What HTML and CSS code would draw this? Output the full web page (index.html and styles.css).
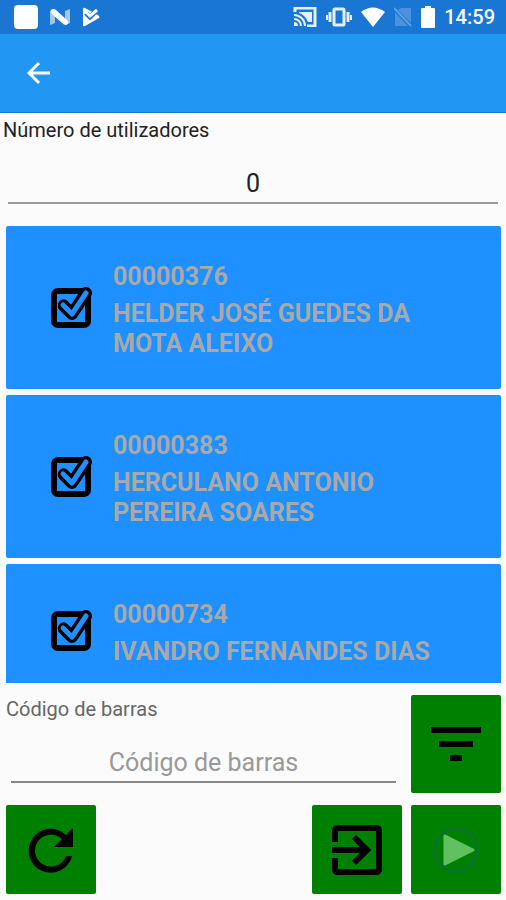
FILE: index.html
```html
<!DOCTYPE html>
<html lang="pt">
<head>
    <meta charset="UTF-8">
    <meta name="viewport" content="width=device-width, initial-scale=1.0">
    <title>Utilizadores</title>
    <link rel="stylesheet" href="styles.css">
</head>
<body>
    <svg class="sprite" aria-hidden="true">
        <symbol id="icon-check" viewBox="0 0 44 44">
            <rect x="4" y="5" width="34" height="34" rx="4" fill="none" stroke="#000" stroke-width="6"/>
            <path d="M13 19l9 9L36 7" fill="none" stroke="#000" stroke-width="12" stroke-linecap="round" stroke-linejoin="round"/>
            <path d="M13 19l9 9L36 7" fill="none" stroke="#1e90ff" stroke-width="5" stroke-linecap="round" stroke-linejoin="round"/>
            <path d="M7 8v28h28V22l-9 11q-4 3-8 0L9 24q-3-5 1-9 4-4 8 0l3 3 6-10z" fill="#1e90ff"/>
            <path d="M13 19l9 9L36 7" fill="none" stroke="#000" stroke-width="10" stroke-linecap="round" stroke-linejoin="round"/>
            <path d="M13 19l9 9L36 7" fill="none" stroke="#1e90ff" stroke-width="5" stroke-linecap="round" stroke-linejoin="round"/>
        </symbol>
    </svg>

    <div class="status-bar">
        <div class="notifications">
            <svg width="24" height="24" viewBox="0 0 24 24"><rect width="24" height="24" rx="4" fill="#fff"/></svg>
            <svg width="20" height="18" viewBox="0 0 20 18">
                <path d="M0 3l5-2v14l-5 2zM15 3l5-2v14l-5 2z" fill="#fff" opacity=".6"/>
                <path d="M1 2q2-2 5 0l12 11q1 3-2 4-2 0-4-2L2 6q-2-2-1-4z" fill="#fff"/>
            </svg>
            <svg width="18" height="20" viewBox="0 0 18 20">
                <path d="M1 2q0-2 2-1l11 6 3 2q1 1 0 2L3 19q-2 1-2-1z" fill="#fff"/>
                <path d="M4 6l4 4 8-8" fill="none" stroke="#1976d2" stroke-width="5"/>
                <path d="M4 5l4 4 7-6" fill="none" stroke="#fff" stroke-width="3"/>
            </svg>
        </div>
        <div class="indicators">
            <svg width="24" height="20" viewBox="0 0 24 20" fill="none" stroke="#e3f0fd" stroke-width="2">
                <path d="M2 5V1h20v18h-8" stroke-width="3"/>
                <path d="M6 5h13v10h-4Q12 8 6 6z" fill="#e3f0fd" stroke="none"/>
                <path d="M1 8a11 11 0 0 1 11 11M1 12a7 7 0 0 1 7 7"/>
                <path d="M1 15a4 4 0 0 1 4 4H1z" fill="#e3f0fd" stroke="none"/>
            </svg>
            <svg width="26" height="20" viewBox="0 0 26 20" fill="none" stroke="#e3f0fd" stroke-width="2">
                <rect x="8" y="2" width="10" height="16" rx="1" stroke-width="3"/>
                <path d="M4 5v10M22 5v10" stroke-width="3"/>
                <path d="M1 8v5M25 8v5"/>
            </svg>
            <svg width="24" height="20" viewBox="0 0 24 20"><path d="M0 5Q12-4 24 5L12 20z" fill="#fff"/></svg>
            <svg width="18" height="20" viewBox="0 0 18 20">
                <path d="M7 1h10v15L4 3zM1 5l13 14H1z" fill="#4a92df"/>
                <path d="M0 1l17 18" stroke="#5b9fe3" stroke-width="2"/>
            </svg>
            <svg width="14" height="22" viewBox="0 0 14 22"><path d="M4 0h6v2h3q1 0 1 1v18q0 1-1 1H1q-1 0-1-1V3q0-1 1-1h3z" fill="#fff"/></svg>
            <span class="clock">14:59</span>
        </div>
    </div>

    <header class="app-bar">
        <button class="back" type="button" aria-label="Voltar">
            <svg width="24" height="24" viewBox="0 0 24 24" fill="none" stroke="#fff" stroke-width="3">
                <path d="M23 12H3M12 2L2 12l10 10"/>
            </svg>
        </button>
    </header>

    <section class="counter">
        <label for="userCount">Número de utilizadores</label>
        <input class="line-input" id="userCount" type="text" inputmode="numeric" value="0">
    </section>

    <main class="user-list">
        <label class="user">
            <span class="tick">
                <input type="checkbox" checked>
                <svg width="44" height="44"><use href="#icon-check"/></svg>
            </span>
            <span class="user-text">
                <span class="code">00000376</span>
                <span class="name">HELDER JOSÉ GUEDES DA MOTA ALEIXO</span>
            </span>
        </label>
        <label class="user">
            <span class="tick">
                <input type="checkbox" checked>
                <svg width="44" height="44"><use href="#icon-check"/></svg>
            </span>
            <span class="user-text">
                <span class="code">00000383</span>
                <span class="name">HERCULANO ANTONIO PEREIRA SOARES</span>
            </span>
        </label>
        <label class="user">
            <span class="tick">
                <input type="checkbox" checked>
                <svg width="44" height="44"><use href="#icon-check"/></svg>
            </span>
            <span class="user-text">
                <span class="code">00000734</span>
                <span class="name">IVANDRO FERNANDES DIAS</span>
            </span>
        </label>
    </main>

    <footer class="tools">
        <div class="scan-row">
            <div class="scan">
                <label for="barcode">Código de barras</label>
                <input class="line-input" id="barcode" type="text" placeholder="Código de barras">
            </div>
            <button class="tool tall" type="button" aria-label="Filtrar">
                <svg width="50" height="34" viewBox="0 0 50 34"><path d="M0 0h50v6H0zM8 14h34v6H8zM19 28h12v6H19z"/></svg>
            </button>
        </div>
        <div class="button-row">
            <button class="tool first" type="button" aria-label="Atualizar">
                <svg width="46" height="46" viewBox="0 0 46 46">
                    <path d="M38 8A22 22 0 1 0 44 29H38A16 16 0 1 1 34 12L26 20H45V1z"/>
                </svg>
            </button>
            <button class="tool" type="button" aria-label="Entrar">
                <svg width="50" height="50" viewBox="0 0 50 50" fill="none" stroke="#000" stroke-width="6">
                    <path d="M3 17V6q0-3 3-3h38q3 0 3 3v38q0 3-3 3H6q-3 0-3-3V33"/>
                    <path d="M0 25h34M22 12l13 13-13 13"/>
                </svg>
            </button>
            <button class="tool" type="button" aria-label="Iniciar">
                <svg width="46" height="46" viewBox="0 0 46 46">
                    <circle cx="23" cy="23" r="21" fill="none" stroke="#0f6b3c" stroke-width="2"/>
                    <path d="M12 9l28 14-28 14z" fill="#5fc15f" stroke="#5fc15f" stroke-width="3" stroke-linejoin="round"/>
                </svg>
            </button>
        </div>
    </footer>
</body>
</html>
```

FILE: styles.css
```css
* {
    box-sizing: border-box;
}

body {
    margin: 0;
    height: 100vh;
    display: flex;
    flex-direction: column;
    background: #fbfbfb;
    color: #222;
    font-family: Roboto, sans-serif;
    font-size: 20px;
    line-height: 24px;
}

svg {
    display: block;
    flex: none;
}

button {
    border: none;
    padding: 0;
    cursor: pointer;
}

.sprite {
    position: absolute;
    width: 0;
    height: 0;
}

.status-bar {
    flex: none;
    height: 34px;
    padding: 0 11px 0 14px;
    display: flex;
    justify-content: space-between;
    align-items: center;
    background: #1976d2;
}

.notifications,
.indicators {
    display: flex;
    align-items: center;
}

.notifications {
    gap: 12px;
}

.indicators {
    gap: 9px;
}

.clock {
    color: #fff;
    font-size: 20px;
    font-weight: 500;
}

.app-bar {
    flex: none;
    height: 79px;
    padding: 0 15px;
    display: flex;
    align-items: center;
    background: #2196f3;
    border-bottom: 1px solid #1976d2;
}

.back {
    width: 48px;
    height: 48px;
    display: flex;
    align-items: center;
    justify-content: center;
    background: none;
}

.counter {
    flex: none;
    padding: 5px 8px 0;
}

.counter label {
    display: block;
    margin-left: -5px;
}

.line-input {
    display: block;
    width: 100%;
    height: 40px;
    border: none;
    border-bottom: 2px solid #999;
    padding: 0;
    outline: none;
    background: none;
    color: #222;
    font-family: inherit;
    font-size: 25px;
    text-align: center;
}

.counter .line-input {
    margin-top: 22px;
}

.line-input::placeholder {
    color: #999;
    opacity: 1;
}

.user-list {
    flex: 1;
    min-height: 0;
    margin: 22px 5px 0 6px;
    overflow: hidden;
    display: flex;
    flex-direction: column;
    gap: 6px;
}

.user {
    flex: none;
    padding: 30px 60px 30px 44px;
    display: flex;
    align-items: center;
    gap: 19px;
    background: #1e90ff;
    border-radius: 2px;
    color: #a9a9a9;
    font-size: 25px;
    font-weight: bold;
    line-height: 30px;
    cursor: pointer;
}

.tick {
    display: grid;
}

.tick input,
.tick svg {
    grid-area: 1 / 1;
}

.tick input {
    margin: 0;
    width: 44px;
    height: 44px;
    opacity: 0;
}

.user-text {
    padding-top: 6px;
    display: flex;
    flex-direction: column;
    gap: 7px;
}

.tools {
    flex: none;
    padding: 12px 5px 6px 6px;
    display: flex;
    flex-direction: column;
    gap: 12px;
}

.scan-row,
.button-row {
    display: flex;
    gap: 9px;
}

.scan {
    flex: 1;
    padding: 2px 6px 0 0;
}

.scan label {
    display: block;
    color: #666;
}

.scan .line-input {
    width: auto;
    min-width: calc(100% - 5px);
    margin: 22px 0 0 5px;
    border-color: #888;
}

.tool {
    width: 90px;
    height: 89px;
    display: flex;
    align-items: center;
    justify-content: center;
    background: #008000;
    border-radius: 2px;
}

.tool.tall {
    height: 98px;
}

.tool.first {
    margin-right: auto;
}
```
